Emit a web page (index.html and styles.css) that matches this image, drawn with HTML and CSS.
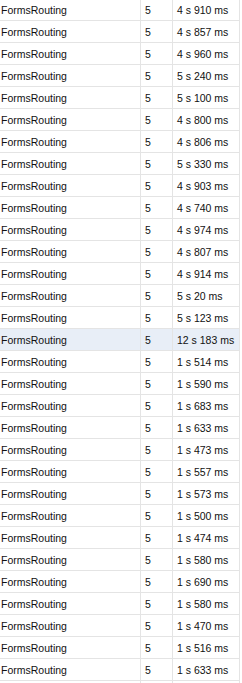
FILE: index.html
```html
<!DOCTYPE html>
<html>
<head>
<meta charset="utf-8">
<link rel="stylesheet" href="styles.css">
</head>
<body>
<div class="grid">
<div class="row"><div class="c name">FormsRouting</div><div class="c num">5</div><div class="c dur">4 s 910 ms</div></div>
<div class="row"><div class="c name">FormsRouting</div><div class="c num">5</div><div class="c dur">4 s 857 ms</div></div>
<div class="row"><div class="c name">FormsRouting</div><div class="c num">5</div><div class="c dur">4 s 960 ms</div></div>
<div class="row"><div class="c name">FormsRouting</div><div class="c num">5</div><div class="c dur">5 s 240 ms</div></div>
<div class="row"><div class="c name">FormsRouting</div><div class="c num">5</div><div class="c dur">5 s 100 ms</div></div>
<div class="row"><div class="c name">FormsRouting</div><div class="c num">5</div><div class="c dur">4 s 800 ms</div></div>
<div class="row"><div class="c name">FormsRouting</div><div class="c num">5</div><div class="c dur">4 s 806 ms</div></div>
<div class="row"><div class="c name">FormsRouting</div><div class="c num">5</div><div class="c dur">5 s 330 ms</div></div>
<div class="row"><div class="c name">FormsRouting</div><div class="c num">5</div><div class="c dur">4 s 903 ms</div></div>
<div class="row"><div class="c name">FormsRouting</div><div class="c num">5</div><div class="c dur">4 s 740 ms</div></div>
<div class="row"><div class="c name">FormsRouting</div><div class="c num">5</div><div class="c dur">4 s 974 ms</div></div>
<div class="row"><div class="c name">FormsRouting</div><div class="c num">5</div><div class="c dur">4 s 807 ms</div></div>
<div class="row"><div class="c name">FormsRouting</div><div class="c num">5</div><div class="c dur">4 s 914 ms</div></div>
<div class="row"><div class="c name">FormsRouting</div><div class="c num">5</div><div class="c dur">5 s 20 ms</div></div>
<div class="row"><div class="c name">FormsRouting</div><div class="c num">5</div><div class="c dur">5 s 123 ms</div></div>
<div class="row selected"><div class="c name">FormsRouting</div><div class="c num">5</div><div class="c dur">12 s 183 ms</div></div>
<div class="row"><div class="c name">FormsRouting</div><div class="c num">5</div><div class="c dur">1 s 514 ms</div></div>
<div class="row"><div class="c name">FormsRouting</div><div class="c num">5</div><div class="c dur">1 s 590 ms</div></div>
<div class="row"><div class="c name">FormsRouting</div><div class="c num">5</div><div class="c dur">1 s 683 ms</div></div>
<div class="row"><div class="c name">FormsRouting</div><div class="c num">5</div><div class="c dur">1 s 633 ms</div></div>
<div class="row"><div class="c name">FormsRouting</div><div class="c num">5</div><div class="c dur">1 s 473 ms</div></div>
<div class="row"><div class="c name">FormsRouting</div><div class="c num">5</div><div class="c dur">1 s 557 ms</div></div>
<div class="row"><div class="c name">FormsRouting</div><div class="c num">5</div><div class="c dur">1 s 573 ms</div></div>
<div class="row"><div class="c name">FormsRouting</div><div class="c num">5</div><div class="c dur">1 s 500 ms</div></div>
<div class="row"><div class="c name">FormsRouting</div><div class="c num">5</div><div class="c dur">1 s 474 ms</div></div>
<div class="row"><div class="c name">FormsRouting</div><div class="c num">5</div><div class="c dur">1 s 580 ms</div></div>
<div class="row"><div class="c name">FormsRouting</div><div class="c num">5</div><div class="c dur">1 s 690 ms</div></div>
<div class="row"><div class="c name">FormsRouting</div><div class="c num">5</div><div class="c dur">1 s 580 ms</div></div>
<div class="row"><div class="c name">FormsRouting</div><div class="c num">5</div><div class="c dur">1 s 470 ms</div></div>
<div class="row"><div class="c name">FormsRouting</div><div class="c num">5</div><div class="c dur">1 s 516 ms</div></div>
<div class="row"><div class="c name">FormsRouting</div><div class="c num">5</div><div class="c dur">1 s 633 ms</div></div>
<div class="row"><div class="c name"></div><div class="c num"></div><div class="c dur"></div></div>
</div>
</body>
</html>
```
FILE: styles.css
```css
html, body {
  margin: 0;
  padding: 0;
  background: #fff;
  overflow: hidden;
}
.grid {
  width: 240px;
  margin-top: -1px;
  font-family: "Liberation Sans", Arial, sans-serif;
  font-size: 10.5px;
  color: #111;
}
.row {
  display: flex;
  height: 21px;
  border-bottom: 1px solid #e4e4e4;
}
.row.selected {
  background: #e8eef7;
}
.c {
  display: flex;
  align-items: center;
  border-right: 1px solid #e4e4e4;
  white-space: nowrap;
  overflow: hidden;
}
.name {
  width: 139px;
  padding-left: 1px;
}
.num {
  width: 27px;
  padding-left: 4px;
}
.dur {
  width: 62px;
  padding-left: 4px;
}
```
